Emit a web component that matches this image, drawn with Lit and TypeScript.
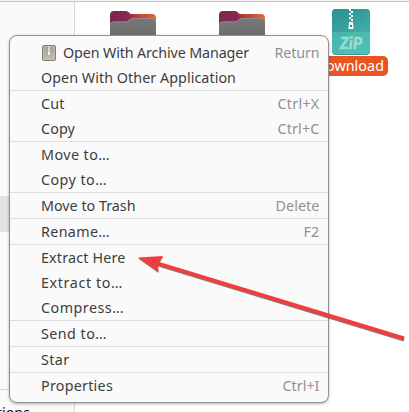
import { LitElement, html, svg, css, nothing } from "lit";
import { customElement } from "lit/decorators.js";

interface Item { label: string; w: number; key?: string; kw?: number; icon?: boolean }

const groups: Item[][] = [
  [
    { label: "Open With Archive Manager", w: 186, key: "Return", kw: 45, icon: true },
    { label: "Open With Other Application", w: 195 },
  ],
  [
    { label: "Cut", w: 23.5, key: "Ctrl+X", kw: 42 },
    { label: "Copy", w: 34, key: "Ctrl+C", kw: 42 },
  ],
  [{ label: "Move to…", w: 69 }, { label: "Copy to…", w: 66 }],
  [{ label: "Move to Trash", w: 94.5, key: "Delete", kw: 44 }],
  [{ label: "Rename…", w: 69, key: "F2", kw: 16 }],
  [{ label: "Extract Here", w: 84.5 }, { label: "Extract to…", w: 82 }, { label: "Compress…", w: 83 }],
  [{ label: "Send to…", w: 66 }],
  [{ label: "Star", w: 28.5 }],
  [{ label: "Properties", w: 72, key: "Ctrl+I", kw: 37 }],
];

const folder = (id: string) => html`<svg class="folder" width="48" height="40" viewBox="0 0 48 40">
  <defs>
    <linearGradient id="b${id}"><stop offset="0" stop-color="#772950"></stop><stop offset=".4" stop-color="#8c2850"></stop><stop offset=".52" stop-color="#b03a3c"></stop><stop offset="1" stop-color="#f0642e"></stop></linearGradient>
    <linearGradient id="f${id}" x2="0" y2="1"><stop offset="0" stop-color="#777"></stop><stop offset="1" stop-color="#666"></stop></linearGradient>
  </defs>
  <path d="M1 36V4Q1 0 5 0H17Q19 0 20 1.5T23 3H43Q47 3 47 7V36Z" fill="url(#b${id})"></path>
  <path d="M1 40V14Q1 10.500 5 10.500H16Q18.500 10.500 20 9T24 7H43Q47 7 47 11V40Z" fill="url(#f${id})"></path>
  <path d="M1.500 14Q1.500 11 5 11H16Q18.500 11 20.500 9.300T24 7.500H43Q46.500 7.500 46.500 11" fill="none" stroke="#949494" stroke-width=".8"></path>
</svg>`;

const zipIcon = html`<svg class="zip" width="38" height="46" viewBox="0 0 38 46">
  <defs><linearGradient id="z" x2=".4" y2="1"><stop offset="0" stop-color="#2b8f91"></stop><stop offset="1" stop-color="#46b9ad"></stop></linearGradient></defs>
  <rect width="38" height="46" rx="4" fill="#379c93"></rect>
  <rect width="38" height="45" rx="4" fill="url(#z)"></rect>
  <path d="M0 23H38V41Q38 45 34 45H4Q0 45 0 41Z" fill="#55c5b7" fill-opacity=".5"></path>
  ${[0, 1, 2, 3, 4, 5].map((i) => svg`<rect x=${i % 2 ? 19 : 17} y=${i * 2} width="2" height="2" fill="#fff"></rect>`)}
  <path d="M17 13H21L21.500 20H16.500Z" fill="#fff"></path>
  <rect x="18" y="16" width="2" height="2" fill="#398f8d"></rect>
  <text x="7.800" y="40" textLength="22.500" lengthAdjust="spacingAndGlyphs" font-family="Lato, sans-serif" font-size="16.500" font-style="italic" font-weight="900" fill="#9bdcd3" stroke="#9bdcd3" stroke-width=".4">ZiP</text>
</svg>`;

const archiveIcon = html`<svg class="archive" width="14" height="16" viewBox="0 0 14 16">
  <defs><linearGradient id="a" x2="0" y2="1"><stop offset="0" stop-color="#a5a092"></stop><stop offset="1" stop-color="#c3beae"></stop></linearGradient></defs>
  <rect x=".5" y=".5" width="13" height="15" rx="1.500" fill="url(#a)" stroke="#7f7b70"></rect>
  <rect x="1.500" y="1.500" width="11" height="13" rx=".5" fill="none" stroke="#d2cec1" stroke-opacity=".5"></rect>
  ${[1, 2, 3, 4, 5, 6].map((i) => svg`<rect x=${i % 2 ? 6 : 7} y=${i} width="1" height="1" fill="#fff"></rect>`)}
  <rect x="6" y="7" width="2" height="3" fill="#f5f4ef"></rect>
</svg>`;

@customElement("app-root")
export class AppRoot extends LitElement {
  static styles = css`
    :host { display: block; position: relative; width: 409px; height: 412px; overflow: hidden; font: 14.3px/25px "Noto Sans", sans-serif; color: #3d3d3d; }
    .window { display: grid; grid-template: 2px 410px / 75px 1fr; height: 412px; background: #fff; }
    .bar { grid-column: 1 / 3; box-sizing: border-box; border-bottom: 1px solid #c4c4c4; background: #f4f4f4; }
    .sidebar { display: flex; flex-direction: column; box-sizing: border-box; height: 410px; overflow: hidden; background: #fafafa; border-right: 1px solid #d8d8d8; }
    .selected { flex: none; margin-top: 194px; height: 36px; background: #e2e2e2; }
    .foot { flex: none; margin-top: 157px; border-top: 1px solid #d8d8d8; height: 25px; display: flex; justify-content: flex-end; padding: 10px 44px 0 0; color: #111; white-space: nowrap; }
    .files { display: flex; padding: 9px 0 0 34px; }
    .files svg { display: block; flex: none; }
    .files .folder { margin-right: 61px; }
    .last { display: flex; flex-direction: column; align-items: center; width: 76px; margin-left: -14px; margin-top: -2px; }
    .name { box-sizing: border-box; margin: 1px 3px 0 0; width: 77px; height: 20px; border-radius: 5px; background: #e95420; color: #fff; line-height: 19px; text-align: right; padding-right: 4px; }
    .menu { position: absolute; left: 9px; top: 35px; width: 320px; height: 368px; box-sizing: border-box; padding: 4px 0; border: 1px solid #929292; border-radius: 8px; background: #fafafa; box-shadow: 0 1px 3px rgba(0,0,0,.3); }
    .group + .group { border-top: 1px solid #dedede; }
    .row { display: flex; align-items: center; height: 25px; padding: 0 8.500px 0 31px; white-space: nowrap; }
    .archive { margin: 0 7px 0 1px; }
    .key { margin-left: auto; color: #919191; }
    .fit { display: inline-block; }
    .arrow { position: absolute; left: 0; top: 0; filter: drop-shadow(0 1px .7px rgba(0,0,0,.5)); }
  `;

  firstUpdated() {
    this.renderRoot.querySelectorAll<HTMLElement>(".fit").forEach((el) => {
      const natural = el.getBoundingClientRect().width;
      const count = el.textContent!.length;
      const spacing = (Number(el.dataset.width) - natural) / count;
      el.style.letterSpacing = `${spacing}px`;
    });
  }

  private row(i: Item) {
    return html`<div class="row">${i.icon ? archiveIcon : nothing}<span class="fit" data-width=${i.w}>${i.label}</span>${i.key ? html`<span class="key fit" data-width=${i.kw!}>${i.key}</span>` : nothing}</div>`;
  }

  render() {
    return html`
      <div class="window">
        <div class="bar"></div>
        <div class="sidebar"><div class="selected"></div><div class="foot"><span>Other Locations</span></div></div>
        <div class="files">${folder("1")}${folder("2")}<div class="last">${zipIcon}<div class="name"><span class="fit" data-width="68.5">Download</span></div></div></div>
      </div>
      <div class="menu">${groups.map((g) => html`<div class="group">${g.map((i) => this.row(i))}</div>`)}</div>
      <svg class="arrow" width="409" height="412">
        <path d="M138 257.500L163 256L159.500 262L404.500 336.500L403.500 340.500L158 265.500L158.500 272Z" fill="#f23d3d"></path>
      </svg>`;
  }
}
